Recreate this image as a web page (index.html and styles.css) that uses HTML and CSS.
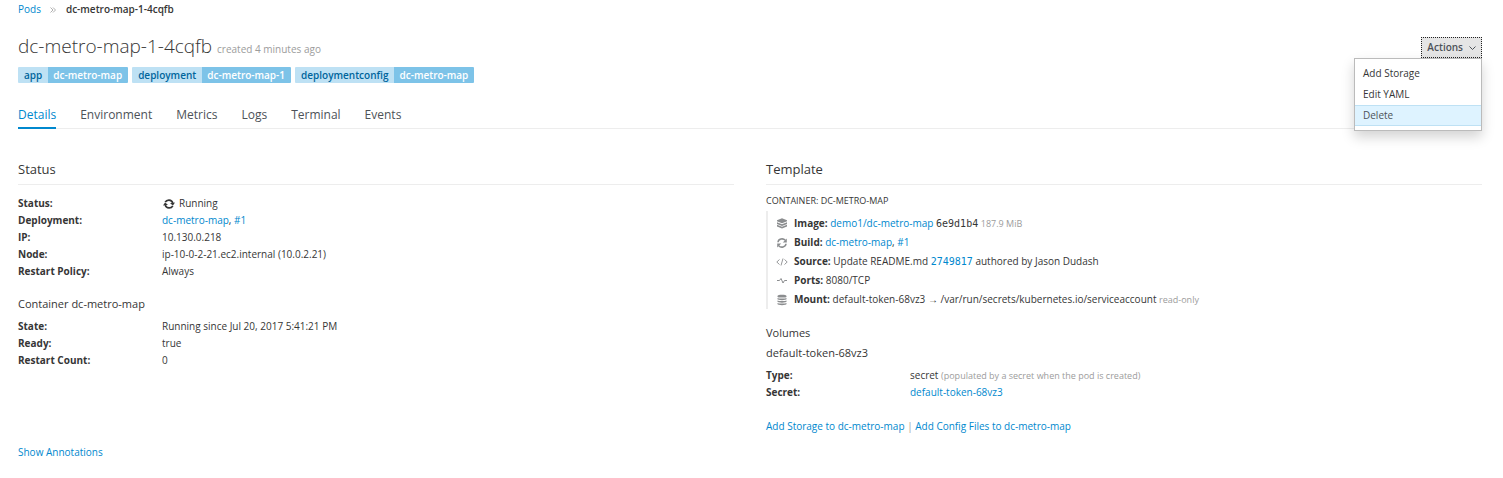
FILE: index.html
```html
<!DOCTYPE html>
<html lang="en">
<head>
<meta charset="utf-8">
<title>dc-metro-map-1-4cqfb</title>
<link rel="stylesheet" href="styles.css">
</head>
<body>
<svg class="sprite" aria-hidden="true">
  <symbol id="i-refresh" viewBox="0 0 12 12"><path d="M2 5.200C2.300 1.800 7 .8 9.300 3.300M10 6.800C9.700 10.200 5 11.200 2.700 8.700" fill="none" stroke="currentColor" stroke-width="1.500"/><path d="M10.800 1.500v3.900H6.800zM1.200 10.500V6.600h4z" fill="currentColor"/></symbol>
  <symbol id="i-running" viewBox="0 0 12 12"><path d="M2.200 4.200C3.800 1.200 8.600 1.200 9.800 5M9.800 7.800C8.200 10.800 3.400 10.800 2.200 7" fill="none" stroke="currentColor" stroke-width="1.700"/><path d="M12 4.400 10 7.500 7 5.200zM0 7.600 2 4.500 5 6.800z" fill="currentColor"/></symbol>
  <symbol id="i-layers" viewBox="0 0 12 12"><path d="M6 .3 11 2.300v1L6 5.300 1 3.300v-1zM1 4.200l5 2 5-2v1.700L6 7.900 1 5.900zM1 6.800l5 2 5-2v1.600l-5 2.200-5-2.200z" fill="currentColor"/></symbol>
  <symbol id="i-code" viewBox="0 0 12 12"><path d="M3.500 3.500.8 6l2.700 2.500M8.500 3.500 11.200 6 8.500 8.500M7 2.500 5 9.500" fill="none" stroke="currentColor" stroke-width=".9"/></symbol>
  <symbol id="i-ports" viewBox="0 0 12 12"><path d="M1 5.500h2.500L5 3.500l2 4.500 1.500-2.500H11" fill="none" stroke="currentColor"/></symbol>
  <symbol id="i-db" viewBox="0 0 12 12"><path d="M1.500 2C1.500.2 10.500.2 10.500 2v.7c0 1.200-9 1.200-9 0zM1.500 4c1 .7 8 .7 9 0v1.300c0 1.100-9 1.100-9 0zM1.500 6.500c1 .7 8 .7 9 0v1.300c0 1.100-9 1.100-9 0zM1.500 9c1 .7 8 .7 9 0v1c0 1.500-9 1.500-9 0z" fill="currentColor"/></symbol>
</svg>
<main class="page">
  <nav class="breadcrumb" aria-label="Breadcrumb">
    <a href="#">Pods</a>
    <svg class="sep" viewBox="0 0 6 6" aria-hidden="true"><path d="M.5.5 3 3 .5 5.500M3 .5 5.500 3 3 5.500" fill="none" stroke="currentColor" stroke-width=".8"/></svg>
    <strong>dc-metro-map-1-4cqfb</strong>
  </nav>
  <header class="header">
    <h1>dc-metro-map-1-4cqfb <small>created 4 minutes ago</small></h1>
    <div class="dropdown">
      <button class="toggle" type="button" aria-expanded="true">Actions <svg class="caret" viewBox="0 0 7 7" aria-hidden="true"><path d="M.5 2.500 3.500 5.500 6.500 2.500" fill="none" stroke="currentColor"/></svg></button>
      <div class="menu">
        <a href="#">Add Storage</a>
        <a href="#">Edit YAML</a>
        <a class="hover" href="#">Delete</a>
      </div>
    </div>
  </header>
  <div class="labels">
    <span class="label"><b>app</b><span>dc-metro-map</span></span>
    <span class="label"><b>deployment</b><span>dc-metro-map-1</span></span>
    <span class="label"><b>deploymentconfig</b><span>dc-metro-map</span></span>
  </div>
  <nav class="tabs" aria-label="Pod">
    <a class="active" href="#">Details</a>
    <a href="#">Environment</a>
    <a href="#">Metrics</a>
    <a href="#">Logs</a>
    <a href="#">Terminal</a>
    <a href="#">Events</a>
  </nav>
  <div class="columns">
    <section>
      <h2>Status</h2>
      <dl class="facts">
        <dt>Status:</dt><dd><svg class="running" aria-hidden="true"><use href="#i-running"/></svg>Running</dd>
        <dt>Deployment:</dt><dd><a href="#">dc-metro-map</a>, <a href="#">#1</a></dd>
        <dt>IP:</dt><dd>10.130.0.218</dd>
        <dt>Node:</dt><dd>ip-10-0-2-21.ec2.internal (10.0.2.21)</dd>
        <dt>Restart Policy:</dt><dd>Always</dd>
      </dl>
      <h3>Container dc-metro-map</h3>
      <dl class="facts">
        <dt>State:</dt><dd>Running since Jul 20, 2017 5:41:21 PM</dd>
        <dt>Ready:</dt><dd>true</dd>
        <dt>Restart Count:</dt><dd>0</dd>
      </dl>
    </section>
    <section>
      <h2>Template</h2>
      <h4>Container: dc-metro-map</h4>
      <ul class="template">
        <li><svg class="icon" aria-hidden="true"><use href="#i-layers"/></svg><span><b>Image:</b> <a href="#">demo1/dc-metro-map</a> <code>6e9d1b4</code> <small>187.9 MiB</small></span></li>
        <li><svg class="icon" aria-hidden="true"><use href="#i-refresh"/></svg><span><b>Build:</b> <a href="#">dc-metro-map</a>, <a href="#">#1</a></span></li>
        <li><svg class="icon" aria-hidden="true"><use href="#i-code"/></svg><span><b>Source:</b> Update README.md <a href="#"><code>2749817</code></a> authored by Jason Dudash</span></li>
        <li><svg class="icon" aria-hidden="true"><use href="#i-ports"/></svg><span><b>Ports:</b> 8080/TCP</span></li>
        <li><svg class="icon" aria-hidden="true"><use href="#i-db"/></svg><span><b>Mount:</b> default-token-68vz3 → /var/run/secrets/kubernetes.io/serviceaccount <small>read-only</small></span></li>
      </ul>
      <h3>Volumes</h3>
      <h3 class="volume">default-token-68vz3</h3>
      <dl class="facts">
        <dt>Type:</dt><dd>secret <small>(populated by a secret when the pod is created)</small></dd>
        <dt>Secret:</dt><dd><a href="#">default-token-68vz3</a></dd>
      </dl>
      <p class="links"><a href="#">Add Storage to dc-metro-map</a> <span class="bar">|</span> <a href="#">Add Config Files to dc-metro-map</a></p>
    </section>
  </div>
  <a class="annotations" href="#">Show Annotations</a>
</main>
</body>
</html>
```
FILE: styles.css
```css
* { box-sizing: border-box; }
body {
  margin: 0;
  background: #fff;
  color: #363636;
  font-family: "Open Sans", "Noto Sans", sans-serif;
  font-size: 10px;
  line-height: 17px;
}
a { color: #0088ce; text-decoration: none; }
small { color: #9c9c9c; font-size: 9px; }
code { font-family: "DejaVu Sans Mono", monospace; font-size: 10px; line-height: 1; }
h1, h2, h3, h4, p, ul, dl, dd { margin: 0; padding: 0; font-weight: 400; }
.sprite { display: none; }
.page { padding: 1px 21px 16px 18px; }

.breadcrumb { display: flex; align-items: center; }
.sep { width: 6px; height: 6px; margin: 0 10px 0 9px; color: #9c9c9c; }
.breadcrumb strong { font-weight: 600; }

.header { display: flex; justify-content: space-between; align-items: flex-start; padding-top: 16px; }
h1 { font-size: 19px; line-height: 25px; font-weight: 300; }
h1 small { font-size: 10px; font-weight: 400; }

.dropdown { position: relative; padding-top: 3px; }
.toggle {
  display: flex;
  align-items: center;
  gap: 6px;
  height: 21px;
  padding: 0 5px;
  border: 1px dotted #222;
  background: #e5e5e5;
  color: #4d5258;
  font: 600 10px/17px "Open Sans", sans-serif;
}
.caret { width: 7px; height: 7px; }
.menu {
  position: absolute;
  top: 100%;
  right: 0;
  width: 128px;
  padding: 4px 0;
  border: 1px solid #bbb;
  background: #fff;
  box-shadow: 0 6px 12px rgba(0, 0, 0, .175);
}
.menu a { display: block; padding: 1px 8px; border: solid transparent; border-width: 1px 0; color: #363636; line-height: 17px; }
.menu .hover { border-color: #bee1f4; background: #def3ff; color: #4d5258; }

.labels { display: flex; gap: 4px; padding-top: 5px; }
.label { display: flex; line-height: 16px; border-radius: 1px; overflow: hidden; font-weight: 600; }
.label b { padding: 0 6px; background: #bee1f4; color: #00659c; font-weight: 600; }
.label span { padding: 0 6px 0 5px; background: #7dc3e8; color: #fff; }

.tabs { display: flex; gap: 24px; margin-top: 20px; border-bottom: 1px solid #ededed; font-size: 12px; }
.tabs a { margin-bottom: -1px; padding: 3px 0 4px; color: #4d5258; border-bottom: 2px solid transparent; line-height: 17px; }
.tabs .active { color: #0088ce; border-color: #0088ce; }

.columns { display: grid; grid-template-columns: 1fr 1fr; gap: 32px; padding-top: 31px; }
h2 { padding-bottom: 5px; border-bottom: 1px solid #ededed; font-size: 13px; line-height: 19px; }
h3 { margin-top: 16px; font-size: 11px; line-height: 16px; }
h4 { margin-top: 8px; font-size: 9px; line-height: 16px; text-transform: uppercase; }
.facts { display: grid; grid-template-columns: 144px 1fr; margin-top: 6px; }
h2 + .facts { margin-top: 10px; }
.facts dt { font-weight: 700; }
.facts dd, .facts dt { line-height: 17px; }
.running { width: 12px; height: 12px; margin: 0 4px 0 1px; vertical-align: -3px; }

.template { list-style: none; margin-top: 2px; padding: 3px 0 0 8px; border-left: 2px solid #ededed; }
.template li { display: flex; align-items: center; gap: 6px; padding: 1px 0; line-height: 17px; }
.icon { width: 12px; height: 12px; color: #8b8d8f; }
.volume { margin-top: 4px; }
.links { margin-top: 17px; }
.bar { color: #9c9c9c; }
.annotations { display: inline-block; margin-top: 9px; }
```
